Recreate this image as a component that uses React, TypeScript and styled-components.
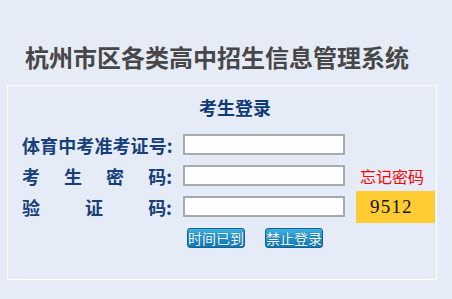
import React from "react";
import styled, { createGlobalStyle } from "styled-components";

const GlobalStyle = createGlobalStyle`
  html, body {
    margin: 0;
    padding: 0;
    background: #e6ecf7;
  }
  body {
    font-family: "Noto Sans CJK SC", "Liberation Sans", sans-serif;
  }
`;

const Page = styled.div`
  width: 452px;
  height: 299px;
  overflow: hidden;
  padding-top: 42px;
  box-sizing: border-box;
`;

const SiteTitle = styled.h1`
  margin: 0;
  padding-left: 25px;
  height: 30px;
  line-height: 30px;
  font-size: 24px;
  font-weight: bold;
  color: #474747;
  white-space: nowrap;
`;

const Panel = styled.div`
  margin: 13px 0 0 7px;
  width: 430px;
  height: 195px;
  box-sizing: border-box;
  border: 1px solid #ffffff;
  padding-top: 9px;
`;

const PanelTitle = styled.h2`
  margin: 0;
  padding-left: 26px;
  height: 24px;
  line-height: 24px;
  text-align: center;
  font-size: 18px;
  font-weight: bold;
  color: #0f3a75;
`;

const Form = styled.div`
  margin: 10px 0 0 14px;
  display: grid;
  grid-template-columns: 150px 162px 79px;
  grid-auto-rows: 31px;
  column-gap: 11px;
  align-items: center;
`;

const Label = styled.div<{ spread?: boolean }>`
  display: flex;
  justify-content: ${({ spread }) => (spread ? "space-between" : "flex-start")};
  font-size: 18px;
  font-weight: bold;
  color: #173f7a;
  white-space: nowrap;
  line-height: 20px;
  letter-spacing: ${({ spread }) => (spread ? "0" : "0.1px")};
`;

const TextInput = styled.input`
  width: 162px;
  height: 21px;
  box-sizing: border-box;
  border: 2px solid #a9a9a9;
  background: #ffffff;
  padding: 0 3px;
  outline: none;
`;

const ForgotLink = styled.span`
  display: block;
  padding-left: 4px;
  font-family: "Noto Sans CJK SC", sans-serif;
  font-size: 16px;
  font-weight: 400;
  line-height: 20px;
  color: #ff0000;
  white-space: nowrap;
  cursor: pointer;
`;

const Captcha = styled.div`
  height: 32px;
  background: #ffcc33;
  display: flex;
  align-items: center;
  padding-left: 14px;
  font-family: "Liberation Serif", serif;
  font-size: 19px;
  color: #111111;
  letter-spacing: 1.2px;
`;

const ButtonRow = styled.div`
  grid-column: 2 / 4;
  align-self: start;
  margin-top: 6px;
  padding-left: 4px;
  display: flex;
  gap: 20px;
`;

const ActionButton = styled.button`
  width: 58px;
  height: 20px;
  box-sizing: border-box;
  padding: 0;
  border: 1px solid #16628f;
  border-radius: 3px;
  background: linear-gradient(#3ab3e3, #1a8fcc 55%, #0f79b8);
  color: #ffffff;
  font-family: "Noto Sans CJK SC", "Liberation Sans", sans-serif;
  font-size: 14px;
  line-height: 18px;
  text-shadow: 0 0 1px #0b4f7c;
  white-space: nowrap;
`;

export default function App() {
  return (
    <Page>
      <GlobalStyle />
      <SiteTitle>杭州市区各类高中招生信息管理系统</SiteTitle>
      <Panel>
        <PanelTitle>考生登录</PanelTitle>
        <Form>
          <Label>体育中考准考证号:</Label>
          <TextInput type="text" />
          <span />

          <Label spread>
            <span>考</span>
            <span>生</span>
            <span>密</span>
            <span>码:</span>
          </Label>
          <TextInput type="password" />
          <ForgotLink>忘记密码</ForgotLink>

          <Label spread>
            <span>验</span>
            <span>证</span>
            <span>码:</span>
          </Label>
          <TextInput type="text" />
          <Captcha>9512</Captcha>

          <span />
          <ButtonRow>
            <ActionButton>时间已到</ActionButton>
            <ActionButton>禁止登录</ActionButton>
          </ButtonRow>
        </Form>
      </Panel>
    </Page>
  );
}
